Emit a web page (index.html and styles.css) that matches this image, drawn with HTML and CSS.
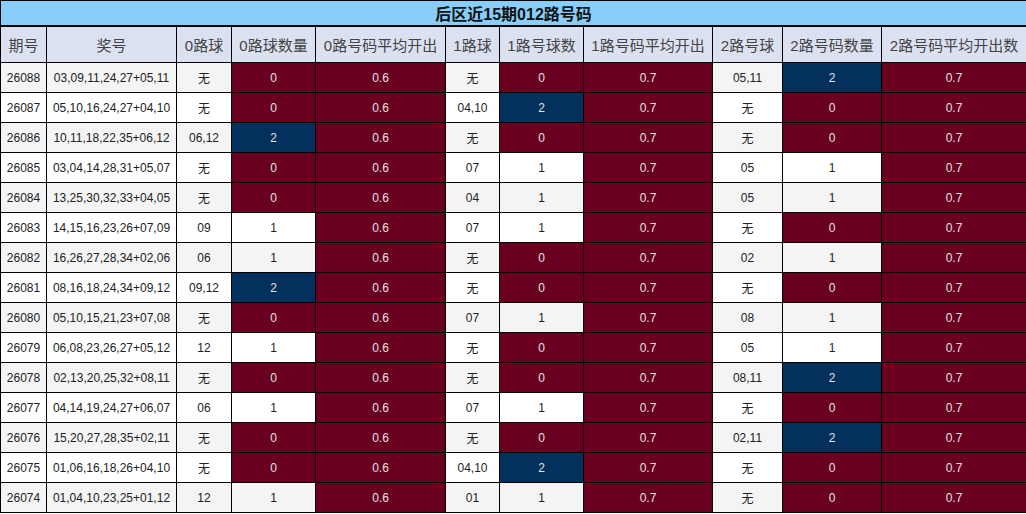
FILE: index.html
```html
<!DOCTYPE html>
<html lang="zh">
<head>
<meta charset="utf-8">
<title>后区近15期012路号码</title>
<link rel="stylesheet" href="styles.css">
</head>
<body>
<table class="grid">
  <colgroup>
    <col class="c1"><col class="c2"><col class="c3"><col class="c4"><col class="c5"><col class="c6"><col class="c7"><col class="c8"><col class="c9"><col class="c10"><col class="c11">
  </colgroup>
  <thead>
    <tr class="title"><th colspan="11">后区近15期012路号码</th></tr>
    <tr class="head">
      <th>期号</th><th>奖号</th><th>0路球</th><th>0路球数量</th><th>0路号码平均开出</th><th>1路球</th><th>1路号球数</th><th>1路号码平均开出</th><th>2路号球</th><th>2路号码数量</th><th>2路号码平均开出数</th>
    </tr>
  </thead>
  <tbody id="rows">
    <tr class="odd"><td>26088</td><td>03,09,11,24,27+05,11</td><td>无</td><td class="r">0</td><td class="r">0.6</td><td>无</td><td class="r">0</td><td class="r">0.7</td><td>05,11</td><td class="b">2</td><td class="r">0.7</td></tr>
    <tr class="even"><td>26087</td><td>05,10,16,24,27+04,10</td><td>无</td><td class="r">0</td><td class="r">0.6</td><td>04,10</td><td class="b">2</td><td class="r">0.7</td><td>无</td><td class="r">0</td><td class="r">0.7</td></tr>
    <tr class="odd"><td>26086</td><td>10,11,18,22,35+06,12</td><td>06,12</td><td class="b">2</td><td class="r">0.6</td><td>无</td><td class="r">0</td><td class="r">0.7</td><td>无</td><td class="r">0</td><td class="r">0.7</td></tr>
    <tr class="even"><td>26085</td><td>03,04,14,28,31+05,07</td><td>无</td><td class="r">0</td><td class="r">0.6</td><td>07</td><td>1</td><td class="r">0.7</td><td>05</td><td>1</td><td class="r">0.7</td></tr>
    <tr class="odd"><td>26084</td><td>13,25,30,32,33+04,05</td><td>无</td><td class="r">0</td><td class="r">0.6</td><td>04</td><td>1</td><td class="r">0.7</td><td>05</td><td>1</td><td class="r">0.7</td></tr>
    <tr class="even"><td>26083</td><td>14,15,16,23,26+07,09</td><td>09</td><td>1</td><td class="r">0.6</td><td>07</td><td>1</td><td class="r">0.7</td><td>无</td><td class="r">0</td><td class="r">0.7</td></tr>
    <tr class="odd"><td>26082</td><td>16,26,27,28,34+02,06</td><td>06</td><td>1</td><td class="r">0.6</td><td>无</td><td class="r">0</td><td class="r">0.7</td><td>02</td><td>1</td><td class="r">0.7</td></tr>
    <tr class="even"><td>26081</td><td>08,16,18,24,34+09,12</td><td>09,12</td><td class="b">2</td><td class="r">0.6</td><td>无</td><td class="r">0</td><td class="r">0.7</td><td>无</td><td class="r">0</td><td class="r">0.7</td></tr>
    <tr class="odd"><td>26080</td><td>05,10,15,21,23+07,08</td><td>无</td><td class="r">0</td><td class="r">0.6</td><td>07</td><td>1</td><td class="r">0.7</td><td>08</td><td>1</td><td class="r">0.7</td></tr>
    <tr class="even"><td>26079</td><td>06,08,23,26,27+05,12</td><td>12</td><td>1</td><td class="r">0.6</td><td>无</td><td class="r">0</td><td class="r">0.7</td><td>05</td><td>1</td><td class="r">0.7</td></tr>
    <tr class="odd"><td>26078</td><td>02,13,20,25,32+08,11</td><td>无</td><td class="r">0</td><td class="r">0.6</td><td>无</td><td class="r">0</td><td class="r">0.7</td><td>08,11</td><td class="b">2</td><td class="r">0.7</td></tr>
    <tr class="even"><td>26077</td><td>04,14,19,24,27+06,07</td><td>06</td><td>1</td><td class="r">0.6</td><td>07</td><td>1</td><td class="r">0.7</td><td>无</td><td class="r">0</td><td class="r">0.7</td></tr>
    <tr class="odd"><td>26076</td><td>15,20,27,28,35+02,11</td><td>无</td><td class="r">0</td><td class="r">0.6</td><td>无</td><td class="r">0</td><td class="r">0.7</td><td>02,11</td><td class="b">2</td><td class="r">0.7</td></tr>
    <tr class="even"><td>26075</td><td>01,06,16,18,26+04,10</td><td>无</td><td class="r">0</td><td class="r">0.6</td><td>04,10</td><td class="b">2</td><td class="r">0.7</td><td>无</td><td class="r">0</td><td class="r">0.7</td></tr>
    <tr class="odd"><td>26074</td><td>01,04,10,23,25+01,12</td><td>12</td><td>1</td><td class="r">0.6</td><td>01</td><td>1</td><td class="r">0.7</td><td>无</td><td class="r">0</td><td class="r">0.7</td></tr>
  </tbody>
</table>
</body>
</html>
```

FILE: styles.css
```css
html, body {
  margin: 0;
  padding: 0;
  background: #ffffff;
}

.grid {
  border-collapse: collapse;
  table-layout: fixed;
  width: 1026px;
  font-family: "Liberation Sans", Arial, "Noto Sans CJK SC", sans-serif;
  color: #222;
}

.c1 { width: 46px; }
.c2 { width: 130px; }
.c3 { width: 55px; }
.c4 { width: 84px; }
.c5 { width: 130px; }
.c6 { width: 54px; }
.c7 { width: 84px; }
.c8 { width: 129px; }
.c9 { width: 70px; }
.c10 { width: 99px; }
.c11 { width: 145px; }

.grid th,
.grid td {
  border: 1px solid #000;
  padding: 0;
  text-align: center;
  white-space: nowrap;
  overflow: hidden;
}

.title th {
  height: 24px;
  background: #87cefa;
  font-size: 16px;
  font-weight: bold;
  color: #111;
  border-bottom-width: 2px;
}

.head th {
  height: 35px;
  background: #dce1f2;
  font-size: 15px;
  font-weight: normal;
  color: #444;
}

.grid td {
  height: 29px;
  font-size: 12px;
}

.odd td { background: #f4f4f4; }
.even td { background: #ffffff; }

.grid td.r {
  background: #6a0020;
  color: #e2e2e2;
}

.grid td.b {
  background: #04305e;
  color: #e2e2e2;
}
```
